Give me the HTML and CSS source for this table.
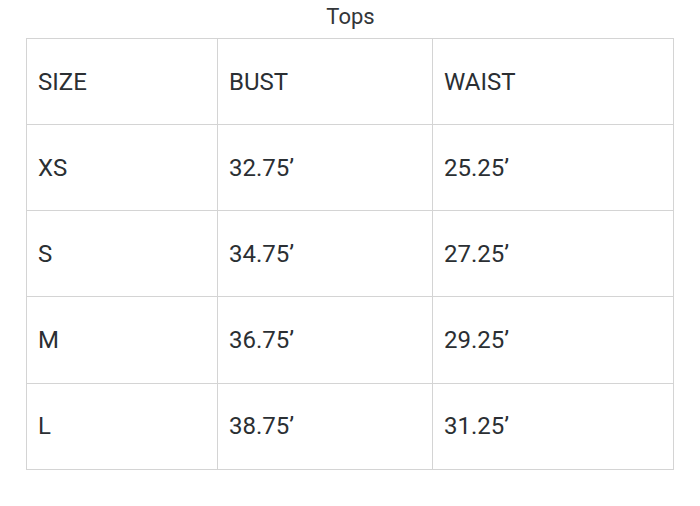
FILE: index.html
```html
<!DOCTYPE html>
<html>
<head>
<meta charset="utf-8">
<link rel="stylesheet" href="styles.css">
</head>
<body>
<div class="chart">
  <h1 class="title">Tops</h1>
  <table class="sizes">
    <colgroup>
      <col class="c1"><col class="c2"><col class="c3">
    </colgroup>
    <tbody>
      <tr><td>SIZE</td><td>BUST</td><td>WAIST</td></tr>
      <tr><td>XS</td><td>32.75’</td><td>25.25’</td></tr>
      <tr><td>S</td><td>34.75’</td><td>27.25’</td></tr>
      <tr><td>M</td><td>36.75’</td><td>29.25’</td></tr>
      <tr><td>L</td><td>38.75’</td><td>31.25’</td></tr>
    </tbody>
  </table>
</div>
</body>
</html>
```
FILE: styles.css
```css
html, body {
  margin: 0;
  padding: 0;
  background: #ffffff;
}
body {
  font-family: Roboto, "Liberation Sans", sans-serif;
  color: #2b2f33;
  width: 700px;
  height: 506px;
}
.chart {
  padding-left: 26px;
}
.title {
  margin: 0;
  height: 38px;
  width: 647px;
  box-sizing: border-box;
  padding-top: 4px;
  padding-left: 2px;
  text-align: center;
  font-size: 22px;
  font-weight: 400;
  line-height: 26px;
  color: #333639;
}
.sizes {
  border-collapse: collapse;
  table-layout: fixed;
  width: 647px;
}
.c1 { width: 191px; }
.c2 { width: 215px; }
.c3 { width: 241px; }
.sizes td {
  border: 1px solid #d4d4d4;
  height: 86px;
  padding: 0 0 0 11px;
  font-size: 24px;
  line-height: 28px;
  vertical-align: middle;
  box-sizing: border-box;
}
.sizes tr:nth-child(n+3) td {
  height: 86.4px;
}
```
